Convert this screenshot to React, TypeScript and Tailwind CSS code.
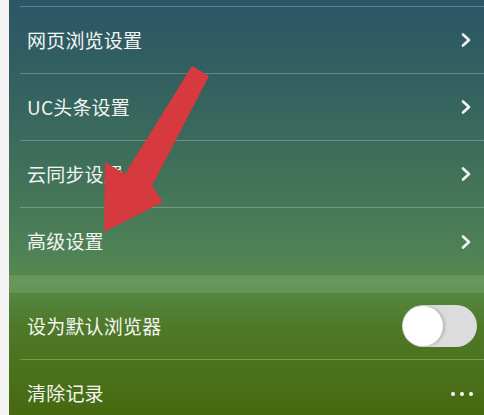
import React from 'react';

function Chevron() {
  return (
    <svg width="12" height="16" viewBox="0 0 12 16" className="shrink-0">
      <path d="M3 2.5 L9 8 L3 13.5" fill="none" stroke="#f4f4f4" strokeWidth="2.6" strokeLinecap="round" strokeLinejoin="round" />
    </svg>
  );
}

function Row({ label, right, last }: { label: string; right: React.ReactNode; last?: boolean }) {
  return (
    <div className={last ? 'h-[67px] flex items-center pl-[7px] pr-[12px]' : 'h-[67px] flex items-center pl-[7px] pr-[12px] border-b border-white/25'}>
      <span className="flex-1 text-[19px] text-[#f3f5f2] tracking-[0.2px]">{label}</span>
      {right}
    </div>
  );
}

export default function App() {
  return (
    <div
      className="w-[484px] h-[415px] overflow-hidden flex bg-[#f4f4f4]"
      style={{ fontFamily: '"Noto Sans CJK SC", "Noto Sans", sans-serif' }}
    >
      <div className="w-[9px] shrink-0" />
      <div className="relative flex-1 flex flex-col bg-[linear-gradient(180deg,#2b5667_0%,#34625f_22%,#437459_45%,#4e8156_60%,#578a4a_68%,#4f7a2a_78%,#46690f_100%)]">
        {/* previous row tail */}
        <div className="h-[6px] ml-[11px] border-b border-white/25 shrink-0 box-content" />
        <div className="ml-[11px] flex flex-col">
          <Row label="网页浏览设置" right={<Chevron />} />
          <Row label="UC头条设置" right={<Chevron />} />
          <Row label="云同步设置" right={<Chevron />} />
          <Row label="高级设置" right={<Chevron />} last />
        </div>
        <div className="h-[18px] shrink-0 bg-white/10" />
        <div className="ml-[11px] flex flex-col">
          <Row
            label="设为默认浏览器"
            right={
              <div className="w-[75px] h-[42px] rounded-full bg-[#dcdcdc] p-[1px] flex items-center mr-[-5px]">
                <div className="w-[40px] h-[40px] rounded-full bg-white shadow-[2px_0_3px_rgba(0,0,0,0.18)]" />
              </div>
            }
          />
          <Row
            label="清除记录"
            last
            right={
              <div className="flex gap-[5px] items-center mr-[-1px]">
                <span className="w-[4px] h-[4px] rounded-full bg-white" />
                <span className="w-[4px] h-[4px] rounded-full bg-white" />
                <span className="w-[4px] h-[4px] rounded-full bg-white" />
              </div>
            }
          />
        </div>

        {/* red annotation arrow */}
        <svg className="absolute left-[-9px] top-0 pointer-events-none" width="484" height="415" viewBox="0 0 484 415">
          <polygon
            points="192,66 209,76 152,186 163,202 104,232 105,162 125,174"
            fill="#d73a3e"
          />
        </svg>
      </div>
    </div>
  );
}
